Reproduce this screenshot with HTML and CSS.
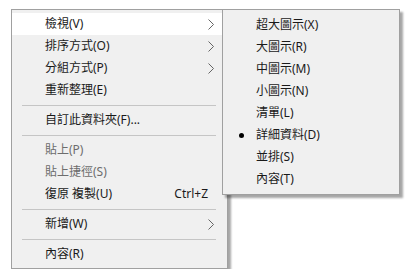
FILE: index.html
```html
<!DOCTYPE html>
<html lang="zh-Hant">
<head>
    <meta charset="UTF-8">
    <title>右鍵選單</title>
    <link rel="stylesheet" href="styles.css">
</head>
<body>
    <div class="menus">
        <div class="menu main">
            <div class="item active"><span class="label">檢視(V)</span><svg class="chev" viewBox="0 0 6 11"><polyline points="0.5,0.5 5.5,5.5 0.5,10.5"/></svg></div>
            <div class="item"><span class="label">排序方式(O)</span><svg class="chev" viewBox="0 0 6 11"><polyline points="0.5,0.5 5.5,5.5 0.5,10.5"/></svg></div>
            <div class="item"><span class="label">分組方式(P)</span><svg class="chev" viewBox="0 0 6 11"><polyline points="0.5,0.5 5.5,5.5 0.5,10.5"/></svg></div>
            <div class="item"><span class="label">重新整理(E)</span></div>
            <div class="sep"></div>
            <div class="item"><span class="label">自訂此資料夾(F)...</span></div>
            <div class="sep"></div>
            <div class="item disabled"><span class="label">貼上(P)</span></div>
            <div class="item disabled"><span class="label">貼上捷徑(S)</span></div>
            <div class="item"><span class="label">復原 複製(U)</span><span class="shortcut">Ctrl+Z</span></div>
            <div class="sep"></div>
            <div class="item"><span class="label">新增(W)</span><svg class="chev" viewBox="0 0 6 11"><polyline points="0.5,0.5 5.5,5.5 0.5,10.5"/></svg></div>
            <div class="sep"></div>
            <div class="item"><span class="label">內容(R)</span></div>
        </div>

        <div class="menu sub">
            <div class="item"><span class="label">超大圖示(X)</span></div>
            <div class="item"><span class="label">大圖示(R)</span></div>
            <div class="item"><span class="label">中圖示(M)</span></div>
            <div class="item"><span class="label">小圖示(N)</span></div>
            <div class="item"><span class="label">清單(L)</span></div>
            <div class="item checked"><span class="label">詳細資料(D)</span></div>
            <div class="item"><span class="label">並排(S)</span></div>
            <div class="item"><span class="label">內容(T)</span></div>
        </div>
    </div>
</body>
</html>
```

FILE: styles.css
```css
body {
    margin: 0;
    background-color: #fff;
    font-family: "Noto Sans", "Noto Sans CJK TC", sans-serif;
    font-size: 12px;
    color: #1a1a1a;
}
.menus {
    position: relative;
    margin: 9px 0 0 11px;
    width: 400px;
}
.menu {
    background-color: #f0f0f0;
    border: 1px solid #a0a0a0;
    box-shadow: 3px 3px 2px rgba(0, 0, 0, 0.35);
    padding: 3px 0;
}
.main {
    width: 215px;
}
.sub {
    position: absolute;
    top: 0;
    left: 211px;
    width: 176px;
    padding: 4px 0;
}
.item {
    position: relative;
    display: flex;
    align-items: center;
    height: 22px;
    padding: 0 13px 0 33px;
    line-height: 22px;
    white-space: nowrap;
}
.item.active {
    background-color: #fff;
}
.item.disabled {
    color: #6d6d6d;
}
.label {
    flex: 1;
}
.shortcut {
    padding-right: 6px;
}
.chev {
    width: 6px;
    height: 11px;
    fill: none;
    stroke: #555;
    stroke-width: 0.9;
}
.checked::before {
    content: "";
    position: absolute;
    left: 16px;
    top: 9px;
    width: 5px;
    height: 5px;
    border-radius: 50%;
    background-color: #000;
}
.sep {
    height: 1px;
    margin: 4px 11px 3px 10px;
    background-color: #c5c5c5;
}
```
